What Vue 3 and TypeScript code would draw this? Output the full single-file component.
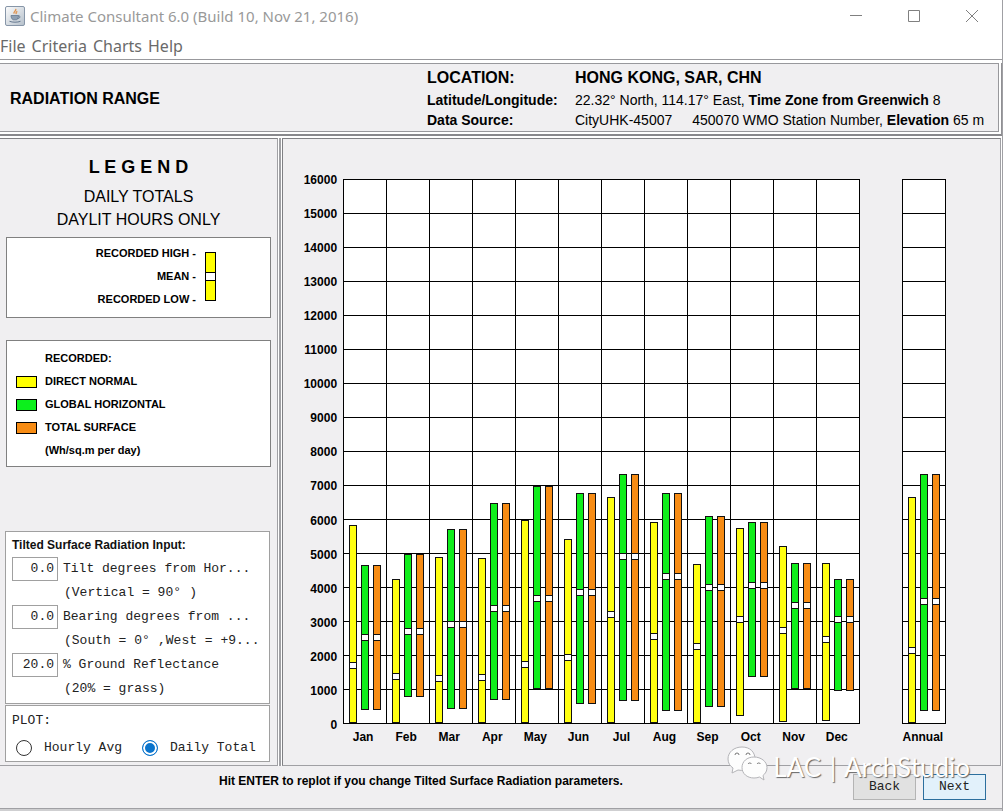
<script setup lang="ts">
import { ref } from 'vue'

type Range = [high: number, mean: number, low: number]
interface Column { label: string; x: number; direct: Range; global: Range }

const menus = ['File', 'Criteria', 'Charts', 'Help']

const chartLeft = 60
const chartTop = 40
const columnWidth = 43
const rowHeight = 34
const rows = 16
const chartBottom = chartTop + rows * rowHeight
const annualLeft = 619

const months: [string, Range, Range][] = [
  ['Jan', [5830, 1700, 20], [4647, 2520, 402]],
  ['Feb', [4235, 1373, 20], [4971, 2706, 784]],
  ['Mar', [4882, 1324, 20], [5706, 2902, 431]],
  ['Apr', [4853, 1353, 20], [6471, 3373, 696]],
  ['May', [5971, 1735, 20], [6971, 3676, 1020]],
  ['Jun', [5412, 1931, 20], [6765, 3843, 578]],
  ['Jul', [6647, 3206, 20], [7324, 4902, 676]],
  ['Aug', [5912, 2559, 20], [6765, 4324, 373]],
  ['Sep', [4676, 2265, 20], [6088, 4000, 490]],
  ['Oct', [5735, 3059, 225], [5912, 4059, 1373]],
  ['Nov', [5206, 2735, 49], [4706, 3471, 1020]],
  ['Dec', [4706, 2471, 78], [4235, 3059, 961]],
]

const columns: Column[] = [
  ...months.map(([label, direct, global], i) => ({ label, direct, global, x: chartLeft + i * columnWidth })),
  { label: 'Annual', x: annualLeft, direct: [6647, 2147, 20], global: [7324, 3578, 373] },
]

const yOf = (value: number) => Math.round(chartBottom - (value / 1000) * rowHeight)

const bars = columns.flatMap((c) =>
  [
    { kind: 'direct', range: c.direct, dx: 6 },
    { kind: 'global', range: c.global, dx: 18 },
    { kind: 'surface', range: c.global, dx: 30 },
  ].map((b) => ({
    key: c.label + b.kind,
    kind: b.kind,
    x: c.x + b.dx,
    top: yOf(b.range[0]),
    mean: yOf(b.range[1]) - 3,
    height: yOf(b.range[2]) - yOf(b.range[0]),
  })),
)

const series = [
  { kind: 'direct', label: 'DIRECT NORMAL' },
  { kind: 'global', label: 'GLOBAL HORIZONTAL' },
  { kind: 'surface', label: 'TOTAL SURFACE' },
]

const tilt = ref('0.0')
const bearing = ref('0.0')
const reflectance = ref('20.0')
const plot = ref('daily')
</script>

<template>
  <div class="window">
    <header class="titlebar">
      <svg class="java" width="20" height="20" viewBox="0 0 20 20" aria-hidden="true">
        <defs>
          <linearGradient id="tile" x1="0" y1="0" x2="1" y2="1">
            <stop offset="0" stop-color="#fdfdfd" />
            <stop offset="1" stop-color="#b4bfca" />
          </linearGradient>
        </defs>
        <rect x="0.5" y="0.5" width="19" height="19" rx="1.5" fill="url(#tile)" stroke="#8796a8" />
        <path d="M10.5 3c1.6 1.600-2.800 2.600-1.300 4.600M12.300 5.300c-2.200 1.100-1.300 1.700-1 2.900" fill="none" stroke="#e0924c" stroke-width="1.300" />
        <path d="M6 9.500h7.500c0 2-.8 3.500-1.800 4.300H8C6.900 13 6 11.500 6 9.500z" fill="#8fa0b3" stroke="#65788f" stroke-width=".8" />
        <path d="M13.300 10c2.500-.6 2.300 2.400-.9 2.700M4.500 15.300c3 1.200 8 1.200 11 0" fill="none" stroke="#65788f" />
      </svg>
      <h1>Climate Consultant 6.0 (Build 10, Nov 21, 2016)</h1>
      <div class="controls">
        <button type="button" aria-label="Minimize"><svg width="14" height="14"><path d="M1 6.500h12" /></svg></button>
        <button type="button" aria-label="Maximize"><svg width="14" height="14"><path d="M1.500 1.500h11v11h-11z" /></svg></button>
        <button type="button" aria-label="Close"><svg width="14" height="14"><path d="M1 1l12 12M13 1L1 13" /></svg></button>
      </div>
    </header>

    <nav class="menubar">
      <button v-for="m in menus" :key="m" type="button">{{ m }}</button>
    </nav>

    <div class="frame">
      <section class="info">
        <h2>RADIATION RANGE</h2>
        <dl>
          <dt class="big">LOCATION:</dt>
          <dd class="big">HONG KONG, SAR, CHN</dd>
          <dt>Latitude/Longitude:</dt>
          <dd>22.32° North, 114.17° East, <b>Time Zone from Greenwich</b> 8</dd>
          <dt>Data Source:</dt>
          <dd><span class="source">CityUHK-45007</span>450070 WMO Station Number, <b>Elevation</b> 65 m</dd>
        </dl>
      </section>
    </div>

    <main>
      <aside>
        <h3>L E G E N D</h3>
        <p class="sub">DAILY TOTALS</p>
        <p class="sub">DAYLIT HOURS ONLY</p>

        <div class="box key">
          <div class="keylabels">
            <span>RECORDED HIGH -</span>
            <span>MEAN -</span>
            <span>RECORDED LOW -</span>
          </div>
          <div class="keybar"><i></i></div>
        </div>

        <div class="box recorded">
          <p>RECORDED:</p>
          <p v-for="s in series" :key="s.kind"><i :class="s.kind"></i>{{ s.label }}</p>
          <p>(Wh/sq.m per day)</p>
        </div>

        <form class="inputs" @submit.prevent>
          <h4>Tilted Surface Radiation Input:</h4>
          <div class="field">
            <input id="tilt" v-model="tilt" type="text" />
            <label for="tilt">Tilt degrees from Hor...</label>
          </div>
          <p>(Vertical = 90<span class="deg">°</span>)</p>
          <div class="field">
            <input id="bearing" v-model="bearing" type="text" />
            <label for="bearing">Bearing degrees from ...</label>
          </div>
          <p>(South = 0<span class="deg">°</span>,West = +9...</p>
          <div class="field">
            <input id="reflectance" v-model="reflectance" type="text" />
            <label for="reflectance">% Ground Reflectance</label>
          </div>
          <p>(20% = grass)</p>
        </form>

        <fieldset class="plot">
          <div>PLOT:</div>
          <div class="radios">
            <label><input v-model="plot" type="radio" name="plot" value="hourly" />Hourly Avg</label>
            <label><input v-model="plot" type="radio" name="plot" value="daily" />Daily Total</label>
          </div>
        </fieldset>
      </aside>

      <section class="chart">
        <svg viewBox="0 0 716 625" role="img" aria-label="Radiation range by month">
          <g class="grid">
            <rect :x="chartLeft" :y="chartTop" :width="12 * columnWidth" :height="rows * rowHeight" />
            <rect :x="annualLeft" :y="chartTop" :width="columnWidth" :height="rows * rowHeight" />
            <path v-for="r in rows - 1" :key="'h' + r" :d="`M${chartLeft} ${chartTop + r * rowHeight}h${12 * columnWidth}M${annualLeft} ${chartTop + r * rowHeight}h${columnWidth}`" />
            <path v-for="c in 11" :key="'v' + c" :d="`M${chartLeft + c * columnWidth} ${chartTop}v${rows * rowHeight}`" />
          </g>
          <g class="axis">
            <text v-for="r in rows + 1" :key="'t' + r" :x="chartLeft - 6" :y="chartTop + (r - 1) * rowHeight + 5" text-anchor="end">{{ (rows + 1 - r) * 1000 }}</text>
            <text v-for="c in columns" :key="c.label" :x="c.x + 20" :y="chartBottom + 17" text-anchor="middle">{{ c.label }}</text>
          </g>
          <g class="bars">
            <g v-for="b in bars" :key="b.key">
              <rect :class="b.kind" :x="b.x" :y="b.top" width="7" :height="b.height" />
              <rect class="mean" :x="b.x" :y="b.mean" width="7" height="6" />
            </g>
          </g>
        </svg>
      </section>
    </main>

    <footer>
      <p>Hit ENTER to replot if you change Tilted Surface Radiation parameters.</p>
      <button type="button">Back</button>
      <button type="button" class="next">Next</button>
      <div class="watermark">
        <svg width="42" height="36" viewBox="0 0 42 36" aria-hidden="true">
          <path d="M15 1C7 1 1 6 1 13c0 4 2 7 5 9l-1 5 6-3c9 2 17-3 17-11C28 6 23 1 15 1z" />
          <path d="M27 11c-7 0-12 4.500-12 10.500S20 32 27 32c2 0 4-.3 5.500-1l4.500 3-1-4.500c2.500-2 4-4.500 4-8C40 15.500 34 11 27 11z" />
          <g class="eyes">
            <path d="M8 9a2 2 0 0 1 4 0M19 9a2 2 0 0 1 4 0M21 18a2 2 0 0 1 3.500 0M30 18a2 2 0 0 1 3.500 0" />
          </g>
        </svg>
        <span>LAC <span class="bar">|</span> ArchStudio</span>
      </div>
    </footer>
    <div class="edge"></div>
  </div>
</template>

<style>
body {
  margin: 0;
}
</style>

<style scoped>
.window {
  box-sizing: border-box;
  min-height: 100vh;
  display: flex;
  flex-direction: column;
  border-right: 1px solid #a0a0a4;
  background: #fff;
  font-family: "Liberation Sans", Arial, sans-serif;
  color: #000;
}
h1, h2, h3, h4, p, dl, dd {
  margin: 0;
}
button {
  font: inherit;
  color: inherit;
}

.titlebar {
  height: 32px;
  display: flex;
  align-items: center;
  gap: 5px;
  padding-left: 5px;
  color: #999;
}
.titlebar h1 {
  font: 400 15px "Noto Sans", sans-serif;
  flex: 1;
}
.controls {
  display: flex;
  margin-right: 1px;
}
.controls button {
  width: 58px;
  height: 32px;
  padding: 0;
  border: 0;
  background: none;
}
.controls svg {
  display: block;
  margin: auto;
}
.controls path {
  fill: none;
  stroke: #808080;
}
.menubar {
  height: 27px;
  display: flex;
  align-items: center;
  gap: 6px;
  border-bottom: 1px solid #98989c;
}
.menubar button {
  border: 0;
  padding: 0;
  background: none;
  font: 400 16px/24px "Noto Sans", sans-serif;
  color: #6a6a6a;
}

.frame {
  margin-top: 3px;
  padding: 0 2px 2px 0;
  border-right: 1px solid #909094;
  border-bottom: 2px solid #88888c;
}
.info {
  display: flex;
  height: 67px;
  border: 1px solid #98989c;
  border-left: 0;
  background: #f0eff1;
}
.info h2 {
  flex: 0 0 417px;
  padding-left: 10px;
  font-size: 16px;
  line-height: 70px;
}
dl {
  display: grid;
  grid-template-columns: 148px 1fr;
  grid-template-rows: 25px 20px 20px;
  align-items: center;
  padding-top: 1px;
  font-size: 14px;
  white-space: nowrap;
}
dt {
  font-weight: bold;
}
.big {
  font-size: 16px;
  font-weight: bold;
}
.source {
  margin-right: 20px;
}

main {
  flex: 1;
  display: flex;
  gap: 2px;
  padding: 2px 1px 0 0;
}
aside {
  flex: 0 0 277px;
  border-top: 1px solid #808084;
  border-right: 1px solid #a0a0a4;
  border-bottom: 1px solid #a0a0a4;
  background: #f0eff1;
  display: flex;
  flex-direction: column;
}
h3 {
  margin-top: 16px;
  font-size: 18px;
  line-height: 24px;
  text-align: center;
}
.sub {
  font-size: 16px;
  line-height: 23px;
  text-align: center;
}
h3 + .sub {
  margin-top: 6px;
}
.box {
  margin: 0 6px;
  border: 1px solid #808080;
  background: #fff;
  font-size: 11px;
  font-weight: bold;
}
.key {
  display: flex;
  gap: 9px;
  padding: 4px 0 6px;
  margin-top: 6px;
}
.keylabels {
  width: 189px;
  display: flex;
  flex-direction: column;
  text-align: right;
  line-height: 23px;
}
.keybar {
  width: 9px;
  height: 47px;
  margin-top: 10px;
  border: 1px solid #000;
  background: #ff0;
  display: flex;
  align-items: center;
}
.keybar i {
  flex: 1;
  height: 7px;
  border: solid #000;
  border-width: 1px 0;
  background: #fff;
}
.recorded {
  margin-top: 22px;
  padding: 6px 0 4px;
}
.recorded p {
  display: flex;
  align-items: center;
  padding-left: 38px;
  line-height: 23px;
}
.recorded i {
  width: 19px;
  height: 10px;
  margin: 0 8px 0 -29px;
  border: 1px solid #000;
}
i.direct { background: #ff0; }
i.global { background: #0cf01c; }
i.surface { background: #f78c14; }

.inputs, .plot {
  margin: 0 7px 0 5px;
  border: 1px solid #a0a0a0;
  background: #fff;
  font: 13px/24px "Liberation Mono", monospace;
  color: #222;
}
.inputs {
  margin-top: auto;
  padding: 2px 0 2px 6px;
  white-space: nowrap;
}
.inputs h4 {
  font: bold 12px/23px "Liberation Sans", Arial, sans-serif;
  color: #111;
}
.field {
  display: flex;
  gap: 5px;
}
.field input {
  box-sizing: border-box;
  width: 46px;
  height: 24px;
  border: 1px solid #a0a0a0;
  padding: 0 3px;
  font: inherit;
  color: inherit;
  text-align: right;
  background: #fff;
}
.inputs p {
  padding-left: 52px;
}
.deg {
  display: inline-block;
  width: 16px;
}
.plot {
  margin-top: 1px;
  margin-bottom: 3px;
  padding: 3px 0 1px 6px;
  min-width: 0;
}
.radios {
  display: flex;
  gap: 20px;
  padding: 3px 0 0 4px;
}
.radios label {
  display: flex;
  align-items: center;
  gap: 12px;
}
.radios input {
  appearance: none;
  box-sizing: border-box;
  width: 16px;
  height: 16px;
  margin: 0;
  border: 1px solid #333;
  border-radius: 50%;
  background: #fff;
}
.radios input:checked {
  border-color: #0a74cc;
  background: #0a74cc;
  box-shadow: inset 0 0 0 2px #fff;
}

.chart {
  flex: 1;
  min-width: 0;
  margin-left: 2px;
  border: 1px solid #a0a0a4;
  border-top-color: #808084;
  border-left-color: #808084;
  outline: 1px solid #fff;
  background: #f0eff1;
  box-shadow: -3px 0 0 #a0a0a4;
}
.chart svg {
  display: block;
  width: 100%;
  height: auto;
}
.grid {
  fill: #fff;
  stroke: #000;
  shape-rendering: crispEdges;
}
.axis {
  font: bold 12px "Liberation Sans", Arial, sans-serif;
}
.bars rect {
  stroke: #111;
  shape-rendering: crispEdges;
}
.bars .direct { fill: #ff1; }
.bars .global { fill: #10ee1c; }
.bars .surface { fill: #f78c14; }
.bars .mean { fill: #fff; }

footer {
  position: relative;
  display: flex;
  align-items: flex-start;
  gap: 7px;
  height: 42px;
  padding-right: 16px;
  background: #f0eff1;
  border-bottom: 1px solid #a0a0a4;
}
footer p {
  flex: 1;
  padding-left: 219px;
  font-size: 12px;
  font-weight: bold;
  line-height: 30px;
}
footer button {
  width: 63px;
  height: 26px;
  margin-top: 8px;
  padding: 0;
  border: 1px solid #b4b4b4;
  background: #e1e1e1;
  font: 13px "Liberation Mono", monospace;
  color: #222;
}
footer .next {
  border-color: #2c6f9e;
  background: #e2f1fb;
}
.watermark {
  position: absolute;
  right: 32px;
  top: -20px;
  display: flex;
  align-items: flex-start;
  gap: 4px;
  font: 26px/42px Lato, sans-serif;
  color: #fff;
  text-shadow: 1px 1px 1px #666;
  pointer-events: none;
}
.bar {
  margin: 0 2px;
}
.watermark path {
  fill: #fdfdfd;
  stroke: #b4b4b8;
  stroke-width: 1;
}
.watermark .eyes path {
  fill: none;
  stroke: #777;
}
.edge {
  height: 3px;
  background: #cfcfd1;
}
</style>
